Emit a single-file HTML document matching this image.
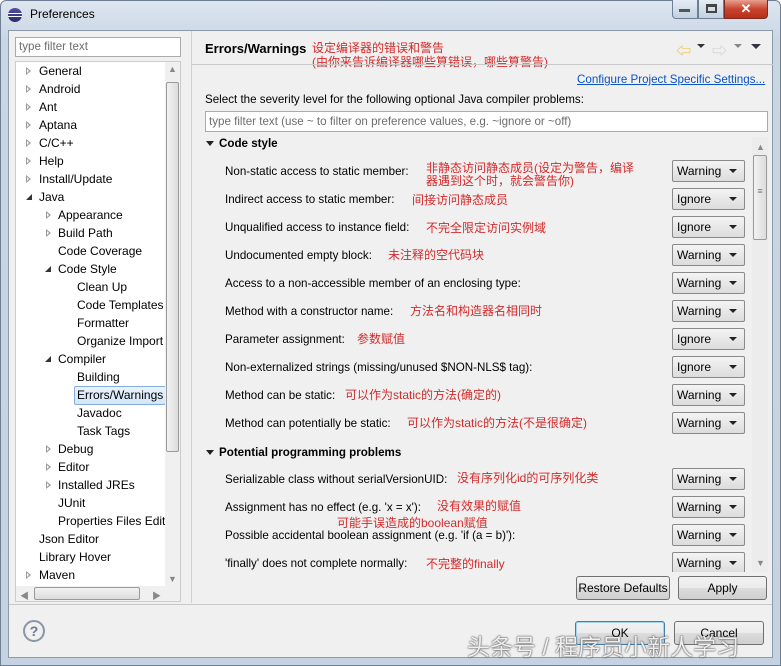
<!DOCTYPE html>
<html><head><meta charset="utf-8"><style>
*{margin:0;padding:0;box-sizing:border-box}
body{width:781px;height:666px;overflow:hidden;background:#fff;font-family:"Liberation Sans","Noto Sans CJK SC",sans-serif;font-size:11.6px;color:#000;position:relative}
.a{position:absolute;white-space:nowrap}
.r{color:#d42a2a;font-family:"Liberation Sans","Noto Sans CJK SC",sans-serif;font-size:12px;line-height:13px}
.dd{position:absolute;left:672px;width:73px;height:22px;border:1px solid #8a8a8a;border-radius:2px;background:linear-gradient(#f4f4f4,#dcdcdc);padding:3px 0 0 4px;font-size:12px}
.dd:after{content:"";position:absolute;right:7px;top:8px;border-left:4px solid transparent;border-right:4px solid transparent;border-top:4px solid #222}
.tr{position:absolute;font-size:12px}
.ex{position:absolute;border-top:4px solid transparent;border-bottom:4px solid transparent;border-left:5px solid #9a9a9a}
.ex:after{content:"";position:absolute;left:-4px;top:-2px;border-top:2px solid transparent;border-bottom:2px solid transparent;border-left:2.5px solid #fff}
.op{position:absolute;border-left:6px solid transparent;border-bottom:6px solid #333}
.arw{position:absolute;color:#888;font-size:9px}
.btn{position:absolute;height:24px;border:1px solid #707070;border-radius:3px;background:linear-gradient(#f2f2f2,#ebebeb 50%,#dddddd 50%,#cfcfcf);text-align:center;line-height:22px;font-size:12px}
</style></head><body>
<div class="a" style="left:0;top:0;width:781px;height:666px;background:linear-gradient(#dde6f0,#c9d6e4 40px,#c5d2e1);border:1px solid #6e7f95;border-radius:6px 6px 0 0"></div>
<div class="a" style="left:8px;top:30px;width:765px;height:628px;background:#f0f0f0;border:1px solid #8d9aab"></div>
<div class="a" style="left:8px;top:8px;width:14px;height:14px;border-radius:50%;background:linear-gradient(#5050a0,#2a2a6a);"></div>
<div class="a" style="left:8px;top:13px;width:14px;height:1px;background:#fff"></div>
<div class="a" style="left:8px;top:16px;width:14px;height:1px;background:#fff"></div>
<div class="a" style="left:30px;top:7px;font-size:12px">Preferences</div>
<div class="a" style="left:672px;top:0;width:26px;height:19px;border:1px solid #6e7f95;border-top:none;border-radius:0 0 0 4px;background:linear-gradient(#e4ecf5,#c2d0e0)"></div>
<div class="a" style="left:679px;top:9px;width:11px;height:3px;background:#555;"></div>
<div class="a" style="left:698px;top:0;width:26px;height:19px;border:1px solid #6e7f95;border-top:none;background:linear-gradient(#e4ecf5,#c2d0e0)"></div>
<div class="a" style="left:706px;top:4px;width:11px;height:9px;border:2px solid #444;border-top-width:3px"></div>
<div class="a" style="left:724px;top:0;width:44px;height:19px;border:1px solid #7a2a20;border-top:none;border-radius:0 0 4px 0;background:linear-gradient(#e8a090,#c8442e 50%,#b82e18);color:#fff;font-weight:bold;text-align:center;font-size:13px;line-height:18px">✕</div>
<div class="a" style="left:15px;top:37px;width:166px;height:20px;background:#fff;border:1px solid #aaa;color:#6d6d6d;padding:2px 3px">type filter text</div>
<div class="a" style="left:15px;top:61px;width:166px;height:541px;background:#fff;border:1px solid #ccc"></div>
<div class="a" style="left:165px;top:62px;width:15px;height:524px;background:#f0f0f0"></div>
<div class="a" style="left:166px;top:82px;width:13px;height:370px;border:1px solid #9a9a9a;border-radius:2px;background:linear-gradient(90deg,#f2f2f2,#dcdcdc)"></div>
<div class="arw" style="left:168px;top:64px">▲</div><div class="arw" style="left:168px;top:574px">▼</div>
<div class="a" style="left:16px;top:586px;width:164px;height:15px;background:#f0f0f0"></div>
<div class="a" style="left:34px;top:587px;width:106px;height:13px;border:1px solid #9a9a9a;border-radius:2px;background:linear-gradient(#f2f2f2,#dcdcdc)"></div>
<div class="arw" style="left:20px;top:589px">◀</div><div class="arw" style="left:152px;top:589px">▶</div>
<div class="a" style="left:16px;top:61px;width:149px;height:525px;overflow:hidden">
<div style="position:relative;left:-16px;top:-61px">
<div class="tr" style="left:39px;top:64px">General</div>
<div class="tr" style="left:39px;top:82px">Android</div>
<div class="tr" style="left:39px;top:100px">Ant</div>
<div class="tr" style="left:39px;top:118px">Aptana</div>
<div class="tr" style="left:39px;top:136px">C/C++</div>
<div class="tr" style="left:39px;top:154px">Help</div>
<div class="tr" style="left:39px;top:172px">Install/Update</div>
<div class="tr" style="left:39px;top:190px">Java</div>
<div class="tr" style="left:58px;top:208px">Appearance</div>
<div class="tr" style="left:58px;top:226px">Build Path</div>
<div class="tr" style="left:58px;top:244px">Code Coverage</div>
<div class="tr" style="left:58px;top:262px">Code Style</div>
<div class="tr" style="left:77px;top:280px">Clean Up</div>
<div class="tr" style="left:77px;top:298px">Code Templates</div>
<div class="tr" style="left:77px;top:316px">Formatter</div>
<div class="tr" style="left:77px;top:334px">Organize Import</div>
<div class="tr" style="left:58px;top:352px">Compiler</div>
<div class="tr" style="left:77px;top:370px">Building</div>
<div class="a" style="left:74px;top:386px;width:92px;height:19px;background:linear-gradient(#eaf3fd,#d3e6fb);border:1px solid #84acdd;border-radius:2px"></div>
<div class="tr" style="left:77px;top:388px">Errors/Warnings</div>
<div class="tr" style="left:77px;top:406px">Javadoc</div>
<div class="tr" style="left:77px;top:424px">Task Tags</div>
<div class="tr" style="left:58px;top:442px">Debug</div>
<div class="tr" style="left:58px;top:460px">Editor</div>
<div class="tr" style="left:58px;top:478px">Installed JREs</div>
<div class="tr" style="left:58px;top:496px">JUnit</div>
<div class="tr" style="left:58px;top:514px">Properties Files Editor</div>
<div class="tr" style="left:39px;top:532px">Json Editor</div>
<div class="tr" style="left:39px;top:550px">Library Hover</div>
<div class="tr" style="left:39px;top:568px">Maven</div>
</div></div>
<div class="a" style="left:191px;top:31px;width:1px;height:572px;background:#d0d0d0"></div>
<div class="a" style="left:205px;top:41px;font-weight:bold;font-size:13px">Errors/Warnings</div>
<div class="a r" style="left:312px;top:42px">设定编译器的错误和警告</div>
<div class="a r" style="left:312px;top:56px">(由你来告诉编译器哪些算错误，哪些算警告)</div>
<div class="a" style="left:192px;top:64px;width:581px;height:1px;background:#c8c8c8"></div>
<div class="a" style="left:676px;top:40px;color:#e8c030;font-size:15px">⇦</div>
<div class="a" style="left:697px;top:44px;border-left:4px solid transparent;border-right:4px solid transparent;border-top:4px solid #333"></div>
<div class="a" style="left:712px;top:40px;color:#ccc;font-size:15px">⇨</div>
<div class="a" style="left:734px;top:44px;border-left:4px solid transparent;border-right:4px solid transparent;border-top:4px solid #888"></div>
<div class="a" style="left:751px;top:44px;border-left:5px solid transparent;border-right:5px solid transparent;border-top:5px solid #334"></div>
<div class="a" style="left:577px;top:73px;color:#0b53c4;text-decoration:underline">Configure Project Specific Settings...</div>
<div class="a" style="left:205px;top:93px">Select the severity level for the following optional Java compiler problems:</div>
<div class="a" style="left:205px;top:111px;width:563px;height:21px;background:#fff;border:1px solid #aaa;color:#6d6d6d;padding:3px 3px">type filter text (use ~ to filter on preference values, e.g. ~ignore or ~off)</div>
<div class="a" style="left:752px;top:137px;width:16px;height:435px;background:#ececec"></div>
<div class="a" style="left:753px;top:155px;width:14px;height:85px;border:1px solid #9a9a9a;border-radius:2px;background:linear-gradient(90deg,#f2f2f2,#dcdcdc);color:#777;font-size:9px;text-align:center;padding-top:30px">≡</div>
<div class="arw" style="left:756px;top:142px">▲</div><div class="arw" style="left:756px;top:558px">▼</div>
<div class="a" style="left:198px;top:135px;width:552px;height:437px;overflow:hidden">
<div style="position:relative;left:-198px;top:-135px">
<div class="a" style="left:206px;top:141px;border-left:4px solid transparent;border-right:4px solid transparent;border-top:5px solid #222"></div>
<div class="a" style="left:219px;top:137px;font-weight:bold">Code style</div>
<div class="a" style="left:225px;top:165px">Non-static access to static member:</div>
<div class="a r" style="left:426px;top:162px">非静态访问静态成员(设定为警告，编译<br>器遇到这个时，就会警告你)</div>
<div class="dd" style="top:160px">Warning</div>
<div class="a" style="left:225px;top:193px">Indirect access to static member:</div><div class="a r" style="left:412px;top:194px">间接访问静态成员</div><div class="dd" style="top:188px">Ignore</div>
<div class="a" style="left:225px;top:221px">Unqualified access to instance field:</div><div class="a r" style="left:426px;top:222px">不完全限定访问实例域</div><div class="dd" style="top:216px">Ignore</div>
<div class="a" style="left:225px;top:249px">Undocumented empty block:</div><div class="a r" style="left:388px;top:249px">未注释的空代码块</div><div class="dd" style="top:244px">Warning</div>
<div class="a" style="left:225px;top:277px">Access to a non-accessible member of an enclosing type:</div><div class="dd" style="top:272px">Warning</div>
<div class="a" style="left:225px;top:305px">Method with a constructor name:</div><div class="a r" style="left:410px;top:305px">方法名和构造器名相同时</div><div class="dd" style="top:300px">Warning</div>
<div class="a" style="left:225px;top:333px">Parameter assignment:</div><div class="a r" style="left:357px;top:333px">参数赋值</div><div class="dd" style="top:328px">Ignore</div>
<div class="a" style="left:225px;top:361px">Non-externalized strings (missing/unused $NON-NLS$ tag):</div><div class="dd" style="top:356px">Ignore</div>
<div class="a" style="left:225px;top:389px">Method can be static:</div><div class="a r" style="left:345px;top:389px">可以作为static的方法(确定的)</div><div class="dd" style="top:384px">Warning</div>
<div class="a" style="left:225px;top:417px">Method can potentially be static:</div><div class="a r" style="left:407px;top:417px">可以作为static的方法(不是很确定)</div><div class="dd" style="top:412px">Warning</div>
<div class="a" style="left:206px;top:450px;border-left:4px solid transparent;border-right:4px solid transparent;border-top:5px solid #222"></div>
<div class="a" style="left:219px;top:446px;font-weight:bold">Potential programming problems</div>
<div class="a" style="left:225px;top:473px">Serializable class without serialVersionUID:</div><div class="a r" style="left:457px;top:472px">没有序列化id的可序列化类</div><div class="dd" style="top:468px">Warning</div>
<div class="a" style="left:225px;top:501px">Assignment has no effect (e.g. 'x = x'):</div><div class="a r" style="left:437px;top:500px">没有效果的赋值</div><div class="dd" style="top:496px">Warning</div>
<div class="a r" style="left:337px;top:517px">可能手误造成的boolean赋值</div>
<div class="a" style="left:225px;top:529px">Possible accidental boolean assignment (e.g. 'if (a = b)'):</div><div class="dd" style="top:524px">Warning</div>
<div class="a" style="left:225px;top:557px">'finally' does not complete normally:</div><div class="a r" style="left:426px;top:558px">不完整的finally</div><div class="dd" style="top:552px">Warning</div>
</div></div>
<div class="btn" style="left:576px;top:576px;width:94px">Restore Defaults</div>
<div class="btn" style="left:678px;top:576px;width:89px">Apply</div>
<div class="a" style="left:9px;top:604px;width:763px;height:1px;background:#c8c8c8"></div>
<div class="a" style="left:23px;top:620px;width:22px;height:22px;border:2px solid #8a96a8;border-radius:50%;text-align:center;font-weight:bold;color:#6a7890;font-size:14px;line-height:18px">?</div>
<div class="btn" style="left:575px;top:621px;width:90px;border-color:#3c7fb1;box-shadow:0 0 0 1px #a6d4f5 inset">OK</div>
<div class="btn" style="left:674px;top:621px;width:90px">Cancel</div>
<div class="a" style="left:467px;top:628px;font-size:23px;color:rgba(255,255,255,0.9);text-shadow:0 0 2px #555,0 0 1px #333;font-family:'Liberation Sans','Noto Sans CJK SC',sans-serif">头条号 / 程序员小新人学习</div>
<div class="ex" style="left:26px;top:67px"></div>
<div class="ex" style="left:26px;top:85px"></div>
<div class="ex" style="left:26px;top:103px"></div>
<div class="ex" style="left:26px;top:121px"></div>
<div class="ex" style="left:26px;top:139px"></div>
<div class="ex" style="left:26px;top:157px"></div>
<div class="ex" style="left:26px;top:175px"></div>
<div class="op" style="left:26px;top:194px"></div>
<div class="ex" style="left:46px;top:211px"></div>
<div class="ex" style="left:46px;top:229px"></div>
<div class="op" style="left:45px;top:266px"></div>
<div class="op" style="left:45px;top:356px"></div>
<div class="ex" style="left:46px;top:445px"></div>
<div class="ex" style="left:46px;top:463px"></div>
<div class="ex" style="left:46px;top:481px"></div>
<div class="ex" style="left:26px;top:571px"></div>
</body></html>
